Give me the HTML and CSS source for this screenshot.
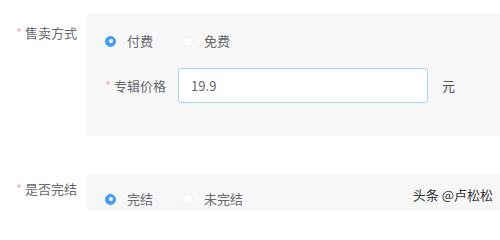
FILE: index.html
```html
<!DOCTYPE html>
<html>
<head>
<meta charset="utf-8">
<link rel="stylesheet" href="styles.css">
</head>
<body>
<div class="form">
  <div class="row row-sale">
    <div class="label"><span class="star">*</span>售卖方式</div>
    <div class="panel panel-sale">
      <div class="radios">
        <label class="radio checked"><span class="dot"></span>付费</label>
        <label class="radio"><span class="dot"></span>免费</label>
      </div>
      <div class="price">
        <div class="sub-label"><span class="star">*</span>专辑价格</div>
        <div class="input">19.9</div>
        <div class="unit">元</div>
      </div>
    </div>
  </div>
  <div class="row row-finish">
    <div class="label"><span class="star">*</span>是否完结</div>
    <div class="panel panel-finish">
      <div class="radios">
        <label class="radio checked"><span class="dot"></span>完结</label>
        <label class="radio"><span class="dot"></span>未完结</label>
      </div>
    </div>
  </div>
</div>
<div class="watermark">头条 @卢松松</div>
</body>
</html>
```

FILE: styles.css
```css
html, body {
  margin: 0;
  padding: 0;
  background: #ffffff;
}
body {
  width: 500px;
  height: 212px;
  overflow: hidden;
  position: relative;
  font-family: "Noto Sans CJK SC", "Noto Sans", sans-serif;
  font-size: 13px;
  line-height: 18px;
  color: #66686c;
}
.form {
  display: flex;
  flex-direction: column;
}
.row {
  display: flex;
}
.row-sale {
  margin-top: 13px;
}
.row-finish {
  margin-top: 38px;
  height: 37px;
}
.label {
  width: 87px;
  box-sizing: border-box;
  padding-left: 16px;
  flex-shrink: 0;
}
.row-sale .label {
  padding-top: 11px;
}
.row-finish .label {
  padding-top: 6px;
}
.star {
  color: #f4b0b0;
  margin-right: 3px;
}
.panel {
  flex: 1;
  background: #f7f7f8;
  padding-left: 18px;
}
.panel-sale {
  padding-top: 19px;
  padding-bottom: 33px;
}
.panel-finish {
  padding-top: 16px;
}
.radios {
  display: flex;
  gap: 29px;
}
.radio {
  display: flex;
  align-items: center;
}
.dot {
  width: 11px;
  height: 11px;
  box-sizing: border-box;
  border-radius: 50%;
  border: 1px solid #ededf0;
  background: #ffffff;
  margin-right: 11px;
  position: relative;
}
.radio.checked .dot {
  background: #409eff;
  border-color: #409eff;
}
.radio.checked .dot::after {
  content: "";
  position: absolute;
  left: 50%;
  top: 50%;
  width: 4px;
  height: 4px;
  margin: -2px 0 0 -2px;
  border-radius: 50%;
  background: #ffffff;
}
.price {
  display: flex;
  align-items: center;
  margin-top: 18px;
}
.sub-label {
  margin-right: 12px;
}
.input {
  width: 250px;
  height: 35px;
  box-sizing: border-box;
  border: 1px solid #a9d6ec;
  border-radius: 3px;
  background: #ffffff;
  padding-left: 12px;
  display: flex;
  align-items: center;
}
.unit {
  margin-left: 14px;
  color: #505256;
}
.watermark {
  position: absolute;
  right: 7px;
  bottom: 8px;
  color: #333333;
  font-size: 13px;
  text-shadow: 0 0 2px #ffffff, 0 0 2px #ffffff;
}
```
